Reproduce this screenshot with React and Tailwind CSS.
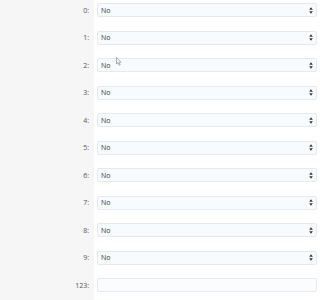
import React from "react";

const rows = ["0", "1", "2", "3", "4", "5", "6", "7", "8", "9"];

function Arrows() {
  return (
    <svg width="4" height="7" viewBox="0 0 4 7" className="shrink-0">
      <path d="M2 0.2 L3.8 2.7 L0.2 2.7 Z" fill="#333" />
      <path d="M2 6.8 L3.8 4.3 L0.2 4.3 Z" fill="#333" />
    </svg>
  );
}

export default function App() {
  return (
    <div
      className="relative w-[320px] h-[300px] overflow-hidden bg-white flex"
      style={{ fontFamily: '"Open Sans", "Noto Sans", sans-serif' }}
    >
      <div className="w-[94px] shrink-0 bg-[#f6f6f6]" />
      <div className="flex-1" />
      <div className="absolute inset-0 flex flex-col pt-[3px] gap-[13.5px]">
        {rows.map((r) => (
          <div key={r} className="flex items-center h-[14px]">
            <div className="w-[90px] pr-[1px] text-right text-[7px] text-[#555] leading-none">
              {r}:
            </div>
            <div className="ml-[7px] w-[220px] h-[14px] rounded-[2px] border border-[#e6eaee] bg-[#f8fbfd] flex items-center justify-between pl-[3px] pr-[3px]">
              <span className="text-[7px] text-[#333] leading-none">No</span>
              <Arrows />
            </div>
          </div>
        ))}
        <div className="flex items-center h-[14px]">
          <div className="w-[90px] pr-[1px] text-right text-[7px] text-[#555] leading-none">
            123:
          </div>
          <div className="ml-[7px] w-[220px] h-[14px] rounded-[2px] border border-[#e6eaee] bg-[#fafcfe]" />
        </div>
      </div>
      <svg
        className="absolute left-[116px] top-[57px]"
        width="6"
        height="9"
        viewBox="0 0 6 9"
      >
        <path d="M0.5 0.5 L0.5 7 L2 5.6 L3.2 8.2 L4.2 7.7 L3 5.2 L5 5.2 Z" fill="#fff" stroke="#777" strokeWidth="0.6" />
      </svg>
    </div>
  );
}
